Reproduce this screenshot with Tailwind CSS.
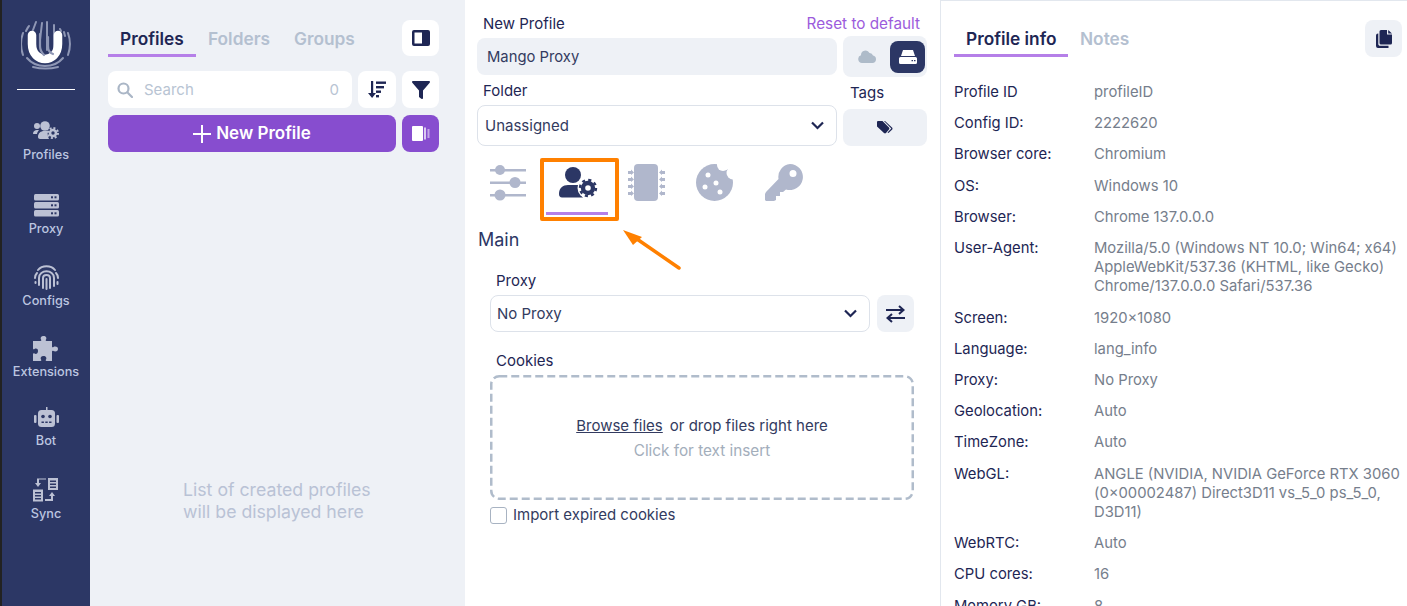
<!DOCTYPE html>
<html lang="en">

<head>
  <meta charset="UTF-8">
  <title>Profiles</title>
  <script src="https://cdn.jsdelivr.net/npm/@tailwindcss/browser@4"></script>
</head>

<body>
  <div class="relative flex h-[606px] w-[1407px] overflow-hidden bg-white font-['Inter',sans-serif] text-[#1e2654]">

    <!-- sidebar -->
    <aside class="flex w-[90px] shrink-0 flex-col items-center border-l-2 border-[#222] bg-[#2c3765] text-[12.700px] font-medium text-[#bcc6e0]">
      <svg class="mt-[20px] h-[50px] w-[50px]" viewBox="0 0 50 50" fill="none" stroke-linecap="round">
        <g stroke="#8f97b5" stroke-width="2">
          <path d="M2 35C-.5 28-.5 20 2 13" />
          <path d="M47 35c2.500-7 2.500-15 0-22" />
          <path d="M5 11c1-2 2-4 3-5" />
          <path d="M12 10l3-8" />
          <path d="M19 20 21 3" />
          <path d="M26 30V2" />
          <path d="M33 30V5" />
          <path d="M39 9l1 2" />
          <path d="M43 12l1 4" />
          <path d="M6 38c5 6 11 8 18 8s13-2 18-8" />
          <path d="M12 47c8 2 17 2 25 0" />
        </g>
        <path d="M11 15v9c0 20 26 20 26 0V15" stroke="#fff" stroke-width="8.500" />
        <path d="M19 14v12c0 3 1 6 4 9" stroke="#8f97b5" stroke-width="2.200" />
        <path d="M27 17v9c0 5 2 7 5 8" stroke="#8f97b5" stroke-width="2.200" />
      </svg>
      <div class="mt-[19px] h-px w-[58px] bg-white"></div>

      <div class="mt-[31px] flex flex-col items-center">
        <svg class="h-[18px] w-[26px]" viewBox="0 0 26 18" fill="#bcc1d4">
          <circle cx="4" cy="5" r="3" />
          <circle cx="12" cy="5" r="4.800" />
          <path d="M0 13c0-3 2-4 4-4h2c-1 1-2 3-2 4z" />
          <path d="M5 16c0-4 3-6 6-6h4c-1 3 0 6 1 8H7c-1 0-2-1-2-2z" />
          <circle cx="20" cy="12" r="3" fill="none" stroke="#bcc1d4" stroke-width="2.600" />
          <circle cx="20" cy="12" r="5" fill="none" stroke="#bcc1d4" stroke-width="2" stroke-dasharray="2 1.900" />
        </svg>
        <span class="mt-[8px] leading-[16px]">Profiles</span>
      </div>

      <div class="mt-[31px] flex flex-col items-center">
        <svg class="h-[25px] w-[25px]" viewBox="0 0 25 25" fill="#bcc1d4">
          <rect y="0" width="25" height="6.500" rx="1.500" />
          <rect y="8" width="25" height="6.500" rx="1.500" />
          <rect y="16" width="25" height="6.500" rx="1.500" />
          <g fill="#2c3765">
            <rect x="17" y="2.300" width="2" height="2" />
            <rect x="20.500" y="2.300" width="2" height="2" />
            <rect x="17" y="10.300" width="2" height="2" />
            <rect x="20.500" y="10.300" width="2" height="2" />
            <rect x="17" y="18.300" width="2" height="2" />
            <rect x="20.500" y="18.300" width="2" height="2" />
          </g>
        </svg>
        <span class="mt-[2px] leading-[16px]">Proxy</span>
      </div>

      <div class="mt-[28px] flex flex-col items-center">
        <svg class="h-[25px] w-[25px]" viewBox="0 0 25 25" fill="none" stroke="#bcc1d4" stroke-width="2" stroke-linecap="round">
          <path d="M4 5c4-5 13-5 17 0" />
          <path d="M1 13c0-3 1-4 2-5" />
          <path d="M24 13c0-3-1-4-2-5" />
          <path d="M5 20v-7c0-9 15-9 15 0v8" />
          <path d="M9 23v-10c0-4 7-4 7 0v10" />
          <path d="M12.500 14v10" />
          <path d="M1.500 17v1" />
          <path d="M23.500 17v2" />
        </svg>
        <span class="mt-[3px] leading-[16px]">Configs</span>
      </div>

      <div class="mt-[27px] flex flex-col items-center">
        <svg class="h-[25px] w-[25px]" viewBox="0 0 25 25" fill="#bcc1d4">
          <path d="M0 5h7.500c1 0 1-1 .5-1.500C7 2 8 0 10.500 0S14 2 13 3.500c-.5.500-.5 1.500.5 1.500H19v5.500c0 1 1 1 1.500.5 1.500-1 4.500-.5 4.500 2s-3 3-4.500 2c-.5-.5-1.500-.5-1.500.5V25h-5.500c-1 0-1-1-.5-1.500 1-1.500 0-3.500-2.500-3.500s-3.500 2-2.500 3.500c.5.500.5 1.500-.5 1.500H0v-7c0-1 1-1 1.500-.5 1.500 1 3.500 0 3.500-2.500S3 12 1.500 13c-.5.500-1.500.5-1.500-.5z" />
        </svg>
        <span class="mt-[3px] leading-[16px]">Extensions</span>
      </div>

      <div class="mt-[27px] flex flex-col items-center">
        <svg class="h-[20px] w-[25px]" viewBox="0 0 25 20" fill="#bcc1d4">
          <rect x="4" y="3" width="17" height="17" rx="3.500" />
          <rect x="12" y="0" width="1.500" height="3" />
          <rect x="0" y="8" width="2.500" height="8" rx="1" />
          <rect x="22.500" y="8" width="2.500" height="8" rx="1" />
          <g fill="#2c3765">
            <circle cx="9" cy="9.500" r="1.800" />
            <circle cx="16" cy="9.500" r="1.800" />
            <rect x="7.500" y="14.500" width="2.400" height="1.500" />
            <rect x="11.300" y="14.500" width="2.400" height="1.500" />
            <rect x="15.100" y="14.500" width="2.400" height="1.500" />
          </g>
        </svg>
        <span class="mt-[6px] leading-[16px]">Bot</span>
      </div>

      <div class="mt-[29px] flex flex-col items-center">
        <svg class="h-[24px] w-[25px]" viewBox="0 0 25 24" fill="#bcc1d4">
          <path fill-rule="evenodd" d="M15 0h10v12H15zM17 2.500v1.500h6V2.500zM17 5.500V7h6V5.500zM17 8.500V10h6V8.500z" />
          <path fill-rule="evenodd" d="M0 11.500h10v12H0zM2 14v1.500h6V14zM2 17v1.500h6V17zM2 20v1.500h6V20z" />
          <path d="M13 1.500H6V5.500H4V.5h9z" />
          <path d="M2 5h6L5 9z" />
          <path d="M12 23v-2h6v-4h2v6z" />
          <path d="M16 18l3-4 3 4z" />
        </svg>
        <span class="mt-[4px] leading-[16px]">Sync</span>
      </div>
    </aside>

    <!-- profile list -->
    <section class="flex w-[375px] shrink-0 flex-col bg-[#eef1f6] pl-[18px] pr-[26px] pt-[20px]">
      <div class="flex items-start justify-between">
        <div class="flex text-[17.300px] font-semibold leading-[31px] text-[#b4c0d0]">
          <div class="w-[88px] border-b-[3px] border-[#b57fe8] pl-[12px] pt-[3px] text-[#1e2654]">Profiles</div>
          <div class="px-[12px] pt-[3px]">Folders</div>
          <div class="px-[12px] pt-[3px]">Groups</div>
        </div>
        <button class="flex h-[36px] w-[37px] items-center justify-center rounded-lg bg-white">
          <svg class="h-[16px] w-[18px]" viewBox="0 0 18 16" fill="#1e2654">
            <path fill-rule="evenodd" d="M2 0h14a2 2 0 0 1 2 2v12a2 2 0 0 1-2 2H2a2 2 0 0 1-2-2V2a2 2 0 0 1 2-2zm.500 2.500v11H10v-11z" />
          </svg>
        </button>
      </div>

      <div class="mt-[14px] flex gap-[6px]">
        <div class="flex h-[37px] w-[244px] items-center rounded-lg bg-white pl-[9px] pr-[13px] pt-[1px] text-[15px] text-[#b8c4d3]">
          <svg class="h-[16px] w-[16px]" viewBox="0 0 16 16" fill="none" stroke="#aab6c6" stroke-width="2.200" stroke-linecap="round">
            <circle cx="6.500" cy="6.500" r="5" />
            <path d="M10.500 10.500 15 15" />
          </svg>
          <span class="ml-[11px] flex-1">Search</span>
          <span>0</span>
        </div>
        <button class="flex h-[37px] w-[38px] items-center justify-center rounded-lg bg-white">
          <svg class="h-[17px] w-[18px]" viewBox="0 0 18 17" fill="#1e2654">
            <path d="M3 0h2.200v12H8l-3.900 5L0 12h3z" />
            <rect x="8" y="0.500" width="10" height="2.400" />
            <rect x="8" y="5" width="8" height="2.400" />
            <rect x="8" y="9.500" width="5" height="2.400" />
            <rect x="8" y="14" width="3" height="2.400" />
          </svg>
        </button>
        <button class="flex h-[37px] w-[37px] items-center justify-center rounded-lg bg-white">
          <svg class="h-[18px] w-[18px]" viewBox="0 0 18 18" fill="#1e2654">
            <path d="M1 0h16c1 0 1.300 1 .7 1.800L11 9.500V17c0 1-1 1.300-1.700.8L7 16V9.500L.3 1.800C-.3 1 0 0 1 0z" />
          </svg>
        </button>
      </div>

      <div class="mt-[7px] flex gap-[6px]">
        <button class="flex h-[37px] w-[288px] items-center justify-center rounded-lg bg-[#874dcf] text-[17px] font-semibold text-white">
          <svg class="mr-[5px] h-[18px] w-[18px]" viewBox="0 0 18 18" fill="#fff">
            <rect x="8" y="0" width="2" height="18" />
            <rect x="0" y="8" width="18" height="2" />
          </svg>
          New Profile
        </button>
        <button class="flex h-[37px] w-[37px] items-center justify-center rounded-lg bg-[#874dcf]">
          <svg class="h-[15px] w-[18px]" viewBox="0 0 18 15" fill="#fff">
            <rect x="0" y="0" width="11" height="15" rx="1" />
            <rect x="12" y="1.500" width="2" height="12" opacity="0.700" />
            <rect x="15.500" y="3" width="2" height="9" opacity="0.500" />
          </svg>
        </button>
      </div>

      <p class="mt-[327px] pl-[75px] text-[17.700px] leading-[22px] text-[#b9c2d5]">List of created profiles<br>will be displayed here</p>
    </section>

    <!-- profile form -->
    <section class="w-[475px] shrink-0 pl-[12px] pr-[13px] text-[15px]">
      <div class="flex justify-between pt-[15px] leading-[18px]">
        <div class="pl-[6px]">New Profile</div>
        <div class="pr-[7px] text-[15.300px] text-[#9c5bdc]">Reset to default</div>
      </div>
      <div class="mt-[3px] flex items-center gap-[6px]">
        <div class="flex h-[37px] w-[360px] items-center rounded-lg bg-[#eef1f6] pl-[10px] pt-[2px] text-[14.800px] text-[#333b60]">Mango Proxy</div>
        <div class="flex h-[41px] w-[84px] items-center justify-between rounded-lg bg-[#eef1f6] pl-[15px] pr-[2px]">
          <svg class="h-[13px] w-[18px]" viewBox="0 0 18 13" fill="#aebbc9">
            <path d="M4 13a4 4 0 0 1-1-7.800 4.500 4.500 0 0 1 8.500-2.200A3.500 3.500 0 0 1 15 5.500 3.800 3.800 0 0 1 14.500 13z" />
          </svg>
          <div class="flex h-[32px] w-[35px] items-center justify-center rounded-lg bg-[#2c3765]">
            <svg class="h-[14px] w-[18px]" viewBox="0 0 18 14" fill="#fff">
              <path d="M4 0h10l2 6H2z" />
              <path fill-rule="evenodd" d="M1.500 7h15A1.500 1.500 0 0 1 18 8.500v4a1.500 1.500 0 0 1-1.500 1.500h-15A1.500 1.500 0 0 1 0 12.500v-4A1.500 1.500 0 0 1 1.500 7zM12.500 10v1.200h1.500V10zM15 10v1.200h1.500V10z" />
            </svg>
          </div>
        </div>
      </div>

      <div class="flex gap-[6px]">
        <div class="w-[360px]">
          <div class="mt-[4px] pl-[6px] leading-[20px]">Folder</div>
          <div class="mt-[4px] flex h-[41px] items-center justify-between rounded-lg border border-[#dde2ea] pl-[7px] pr-[12px] text-[#333b60]">
            <span class="pt-[2px]">Unassigned</span>
            <svg class="h-[9px] w-[13px]" viewBox="0 0 13 9" fill="none" stroke="#1e2654" stroke-width="2.200">
              <path d="M1 1.500 6.500 7 12 1.500" />
            </svg>
          </div>
        </div>
        <div class="w-[84px]">
          <div class="mt-[6px] pl-[7px] leading-[20px]">Tags</div>
          <div class="mt-[6px] flex h-[37px] items-center justify-center rounded-lg bg-[#eef1f6]">
            <svg class="h-[13px] w-[17px]" viewBox="0 0 17 13" fill="#1e2654">
              <path d="M0 1a1 1 0 0 1 1-1h4.500l6.500 6.500a1.500 1.500 0 0 1 0 2L9 12a1.500 1.500 0 0 1-2 0L0 5.500z" />
              <path d="M8 0l7 6.500c.7.700.7 1.500 0 2.200L11.500 12l-1-.5 3.800-4L7 0z" />
            </svg>
          </div>
        </div>
      </div>

      <!-- settings tabs -->
      <div class="mt-[19px] flex h-[50px]">
        <svg class="ml-[13px] h-[36px] w-[36px]" viewBox="0 0 36 36" fill="#b0b7cc">
          <rect x="0" y="4" width="36" height="2.500" />
          <rect x="0" y="16.500" width="36" height="2.500" />
          <rect x="0" y="29" width="36" height="2.500" />
          <circle cx="10" cy="5" r="5" />
          <circle cx="25" cy="17.500" r="5.500" />
          <circle cx="10" cy="30" r="5.500" />
        </svg>
        <div class="ml-[20px] flex h-[50px] w-[62px] flex-col items-center border-b-[3px] border-[#b57fe8]">
          <svg class="ml-[2px] mt-[2px] h-[31px] w-[39px]" viewBox="0 0 39 31" fill="#2c3765">
            <circle cx="14" cy="8" r="8" />
            <path d="M0 27c0-6 4-9 9-9h9c2 0 4 .5 5 1.500-2 3-1.500 8 1 11H3c-2 0-3-1.500-3-3.500z" />
            <circle cx="29" cy="21" r="10.500" fill="#fff" />
            <circle cx="29" cy="21" r="5" fill="none" stroke="#2c3765" stroke-width="4.400" />
            <circle cx="29" cy="21" r="8" fill="none" stroke="#2c3765" stroke-width="2.400" stroke-dasharray="3.100 3.180" />
          </svg>
        </div>
        <svg class="-mt-[1px] ml-[20px] h-[37px] w-[38px]" viewBox="0 0 38 37" fill="#b0b7cc">
          <rect x="6" y="0" width="24" height="37" rx="4" />
          <path d="M0 7h3V5.500L6 8.500 3 11V10H0z" />
          <path d="M0 14h3V12.500L6 15.500 3 18V17H0z" />
          <path d="M0 21h3V19.500L6 22.500 3 25V24H0z" />
          <path d="M0 28h3V26.500L6 29.500 3 32V31H0z" />
          <path d="M37 7h-3V5.500L31 8.500l3 2.500V10h3z" />
          <path d="M37 14h-3V12.500L31 15.500l3 2.500V17h3z" />
          <path d="M37 21h-3V19.500L31 22.500l3 2.500V24h3z" />
          <path d="M37 28h-3V26.500L31 29.500l3 2.500V31h3z" />
        </svg>
        <svg class="-mt-[1px] ml-[30px] h-[37px] w-[37px]" viewBox="0 0 37 37" fill="#b0b7cc">
          <circle cx="18.500" cy="18.500" r="18.500" />
          <g fill="#fff">
            <circle cx="27" cy="1" r="6" />
            <circle cx="37" cy="9" r="6.500" />
            <circle cx="12" cy="11" r="2.500" />
            <circle cx="9" cy="23" r="2.500" />
            <circle cx="20" cy="19" r="2.500" />
            <circle cx="24" cy="28" r="2.500" />
          </g>
        </svg>
        <svg class="-mt-[1px] ml-[32px] h-[37px] w-[38px]" viewBox="0 0 38 37" fill="#b0b7cc">
          <path fill-rule="evenodd" d="M25 0a13 13 0 1 1-4 25.400L18 28h-3v4h-4v4l-2 1H1l-1-1v-6l1-2 12.500-13A13 13 0 0 1 25 0zm3 6a3.500 3.500 0 1 0 0 7 3.500 3.500 0 0 0 0-7z" />
        </svg>
      </div>

      <h2 class="mt-[14px] pl-[1px] text-[18px] leading-[22px] text-[#2c3765]">Main</h2>

      <div class="pl-[13px]">
        <div class="mt-[20px] pl-[6px] leading-[20px]">Proxy</div>
        <div class="mt-[4px] flex gap-[7px]">
          <div class="flex h-[37px] w-[380px] items-center justify-between rounded-lg border border-[#dde2ea] pl-[6px] pr-[12px] text-[#333b60]">
            <span class="pt-[2px]">No Proxy</span>
            <svg class="h-[9px] w-[13px]" viewBox="0 0 13 9" fill="none" stroke="#1e2654" stroke-width="2.200">
              <path d="M1 1.500 6.500 7 12 1.500" />
            </svg>
          </div>
          <button class="flex h-[37px] w-[37px] items-center justify-center rounded-lg bg-[#eef1f6]">
            <svg class="h-[18px] w-[19px]" viewBox="0 0 19 18" fill="none" stroke="#1e2654" stroke-width="2">
              <path d="M0 5h17" />
              <path d="M13 1l4.500 4L13 9" />
              <path d="M19 13H2" />
              <path d="M6 9l-4.500 4L6 17" />
            </svg>
          </button>
        </div>

        <div class="mt-[19px] pl-[6px] leading-[20px]">Cookies</div>
        <div class="relative mt-[4px] flex h-[125px] w-[424px] flex-col items-center pt-[41px]">
          <svg class="absolute inset-0 h-[125px] w-[424px]" viewBox="0 0 424 125" fill="none">
            <rect x="1.250" y="1.250" width="421.500" height="122.500" rx="8" stroke="#b0bccb" stroke-width="2.500" stroke-dasharray="8 4" />
          </svg>
          <div class="leading-[20px] text-[#333b60]"><span class="underline">Browse files</span><span class="ml-[7px]">or drop files right here</span></div>
          <div class="mt-[5px] text-[15.300px] leading-[20px] text-[#a3aebb]">Click for text insert</div>
        </div>
        <div class="mt-[5px] flex items-center">
          <div class="h-[17px] w-[17px] rounded-[3px] border-[1.500px] border-[#a8b3c2]"></div>
          <span class="ml-[6px] leading-[20px] text-[#333b60]">Import expired cookies</span>
        </div>
      </div>
    </section>

    <!-- profile info -->
    <section class="min-w-0 flex-1 border-l border-t border-[#e2e7ee] pl-[13px] pr-[5px] pt-[19px] text-[14.800px]">
      <div class="flex items-start justify-between">
        <div class="flex text-[17.300px] font-semibold leading-[31px] text-[#b4c0d0]">
          <div class="w-[114px] border-b-[3px] border-[#b57fe8] pl-[12px] pt-[3px] text-[#1e2654]">Profile info</div>
          <div class="px-[12px] pt-[3px]">Notes</div>
        </div>
        <button class="flex h-[37px] w-[37px] items-center justify-center rounded-lg bg-[#eef1f6]">
          <svg class="h-[18px] w-[16px]" viewBox="0 0 16 18" fill="#1e2654">
            <path d="M5 0h6v4.500h5V13a1.500 1.500 0 0 1-1.500 1.500H5A1.500 1.500 0 0 1 3.500 13V1.500A1.500 1.500 0 0 1 5 0z" />
            <path d="M12.200 0 16 3.500h-3.800z" />
            <path d="M2.300 3.500V14c0 1 .7 1.800 1.800 1.800h8.400V18H2a2 2 0 0 1-2-2V5.500a2 2 0 0 1 2-2z" />
          </svg>
        </button>
      </div>

      <dl class="mt-[26px] grid grid-cols-[140px_1fr] gap-y-[12px] leading-[19.200px]">
        <dt>Profile ID</dt><dd class="text-[#767e8c]">profileID</dd>
        <dt>Config ID:</dt><dd class="text-[#767e8c]">2222620</dd>
        <dt>Browser core:</dt><dd class="text-[#767e8c]">Chromium</dd>
        <dt>OS:</dt><dd class="text-[#767e8c]">Windows 10</dd>
        <dt>Browser:</dt><dd class="text-[#767e8c]">Chrome 137.0.0.0</dd>
        <dt>User-Agent:</dt><dd class="text-[#767e8c]">Mozilla/5.0 (Windows NT 10.0; Win64; x64) AppleWebKit/537.36 (KHTML, like Gecko) Chrome/137.0.0.0 Safari/537.36</dd>
        <dt>Screen:</dt><dd class="text-[#767e8c]">1920×1080</dd>
        <dt>Language:</dt><dd class="text-[#767e8c]">lang_info</dd>
        <dt>Proxy:</dt><dd class="text-[#767e8c]">No Proxy</dd>
        <dt>Geolocation:</dt><dd class="text-[#767e8c]">Auto</dd>
        <dt>TimeZone:</dt><dd class="text-[#767e8c]">Auto</dd>
        <dt>WebGL:</dt><dd class="text-[#767e8c]">ANGLE (NVIDIA, NVIDIA GeForce RTX 3060 (0×00002487) Direct3D11 vs_5_0 ps_5_0, D3D11)</dd>
        <dt>WebRTC:</dt><dd class="text-[#767e8c]">Auto</dd>
        <dt>CPU cores:</dt><dd class="text-[#767e8c]">16</dd>
        <dt>Memory GB:</dt><dd class="text-[#767e8c]">8</dd>
      </dl>
    </section>

    <!-- annotation over the screenshot -->
    <div class="absolute left-[540px] top-[158px] h-[63px] w-[79px] rounded-[2px] border-[4px] border-[#ff8000]"></div>
    <svg class="absolute left-[620px] top-[225px] h-[50px] w-[65px]" viewBox="0 0 65 50">
      <path d="M59 43 14 12" stroke="#ff8000" stroke-width="3.500" stroke-linecap="round" />
      <path d="M3 5 22 12 13 20z" fill="#ff8000" />
    </svg>
  </div>
</body>

</html>
